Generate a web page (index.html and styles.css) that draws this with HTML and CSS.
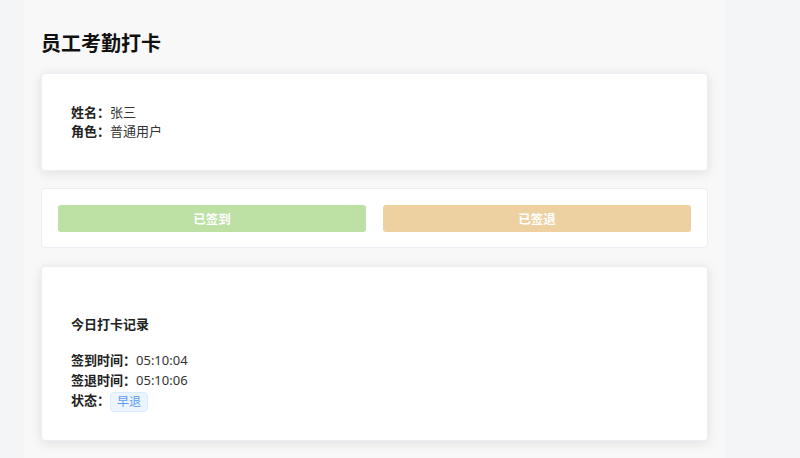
FILE: index.html
```html
<!DOCTYPE html>
<html lang="zh-CN">
<head>
    <meta charset="UTF-8">
    <meta name="viewport" content="width=device-width, initial-scale=1.0">
    <title>员工考勤打卡</title>
    <link rel="stylesheet" href="styles.css">
</head>
<body>

    <div class="page">
        <h2 class="title">员工考勤打卡</h2>

        <div class="card card-shadow user-card">
            <p class="row"><span class="label">姓名：</span>张三</p>
            <p class="row"><span class="label">角色：</span>普通用户</p>
        </div>

        <div class="card action-card">
            <div class="actions">
                <button class="btn btn-success" disabled>已签到</button>
                <button class="btn btn-warning" disabled>已签退</button>
            </div>
        </div>

        <div class="card card-shadow record-card">
            <h3 class="record-title">今日打卡记录</h3>
            <p class="line"><span class="label">签到时间：</span>05:10:04</p>
            <p class="line"><span class="label">签退时间：</span>05:10:06</p>
            <p class="line"><span class="label">状态：</span><span class="tag">早退</span></p>
        </div>
    </div>

</body>
</html>
```

FILE: styles.css
```css
body {
    margin: 0;
    padding: 0;
    background-color: #f4f5f7;
    font-family: "Noto Sans", "Noto Sans CJK SC", sans-serif;
    color: #333;
    font-size: 13px;
}
.page {
    width: 701px;
    margin-left: 24px;
    min-height: 100vh;
    box-sizing: border-box;
    padding: 30px 17px 20px 17px;
    background-color: #f8f8f8;
}
.title {
    margin: 0 0 15px 0;
    font-size: 20px;
    line-height: 28px;
    font-weight: bold;
    color: #111;
}
.card {
    background-color: #fff;
    border: 1px solid #ebeef5;
    border-radius: 4px;
    box-sizing: border-box;
}
.card-shadow {
    box-shadow: 0 2px 12px rgba(0, 0, 0, 0.1);
}
.user-card {
    padding: 29px;
}
.row {
    margin: 0;
    line-height: 19px;
}
.label {
    font-weight: bold;
    color: #222;
}
.action-card {
    margin-top: 17px;
    padding: 16px 16px 15px 16px;
}
.actions {
    display: grid;
    grid-template-columns: 1fr 1fr;
    gap: 17px;
}
.btn {
    height: 27px;
    border: none;
    border-radius: 3px;
    color: #fff;
    font-family: inherit;
    font-size: 12.5px;
    font-weight: bold;
    padding: 0;
}
.btn-success {
    background-color: #bde0a4;
}
.btn-warning {
    background-color: #edd1a1;
}
.record-card {
    margin-top: 18px;
    padding: 29px 29px 28px 29px;
}
.record-title {
    margin: 18px 0 16px 0;
    font-size: 13px;
    line-height: 20px;
    font-weight: bold;
    color: #222;
}
.line {
    margin: 0;
    line-height: 20px;
}
.tag {
    display: inline-block;
    height: 20px;
    box-sizing: border-box;
    padding: 0 6px;
    line-height: 18px;
    font-size: 12px;
    color: #5d9cf0;
    background-color: #ecf5ff;
    border: 1px solid #d9ecff;
    border-radius: 4px;
    vertical-align: middle;
}
```
